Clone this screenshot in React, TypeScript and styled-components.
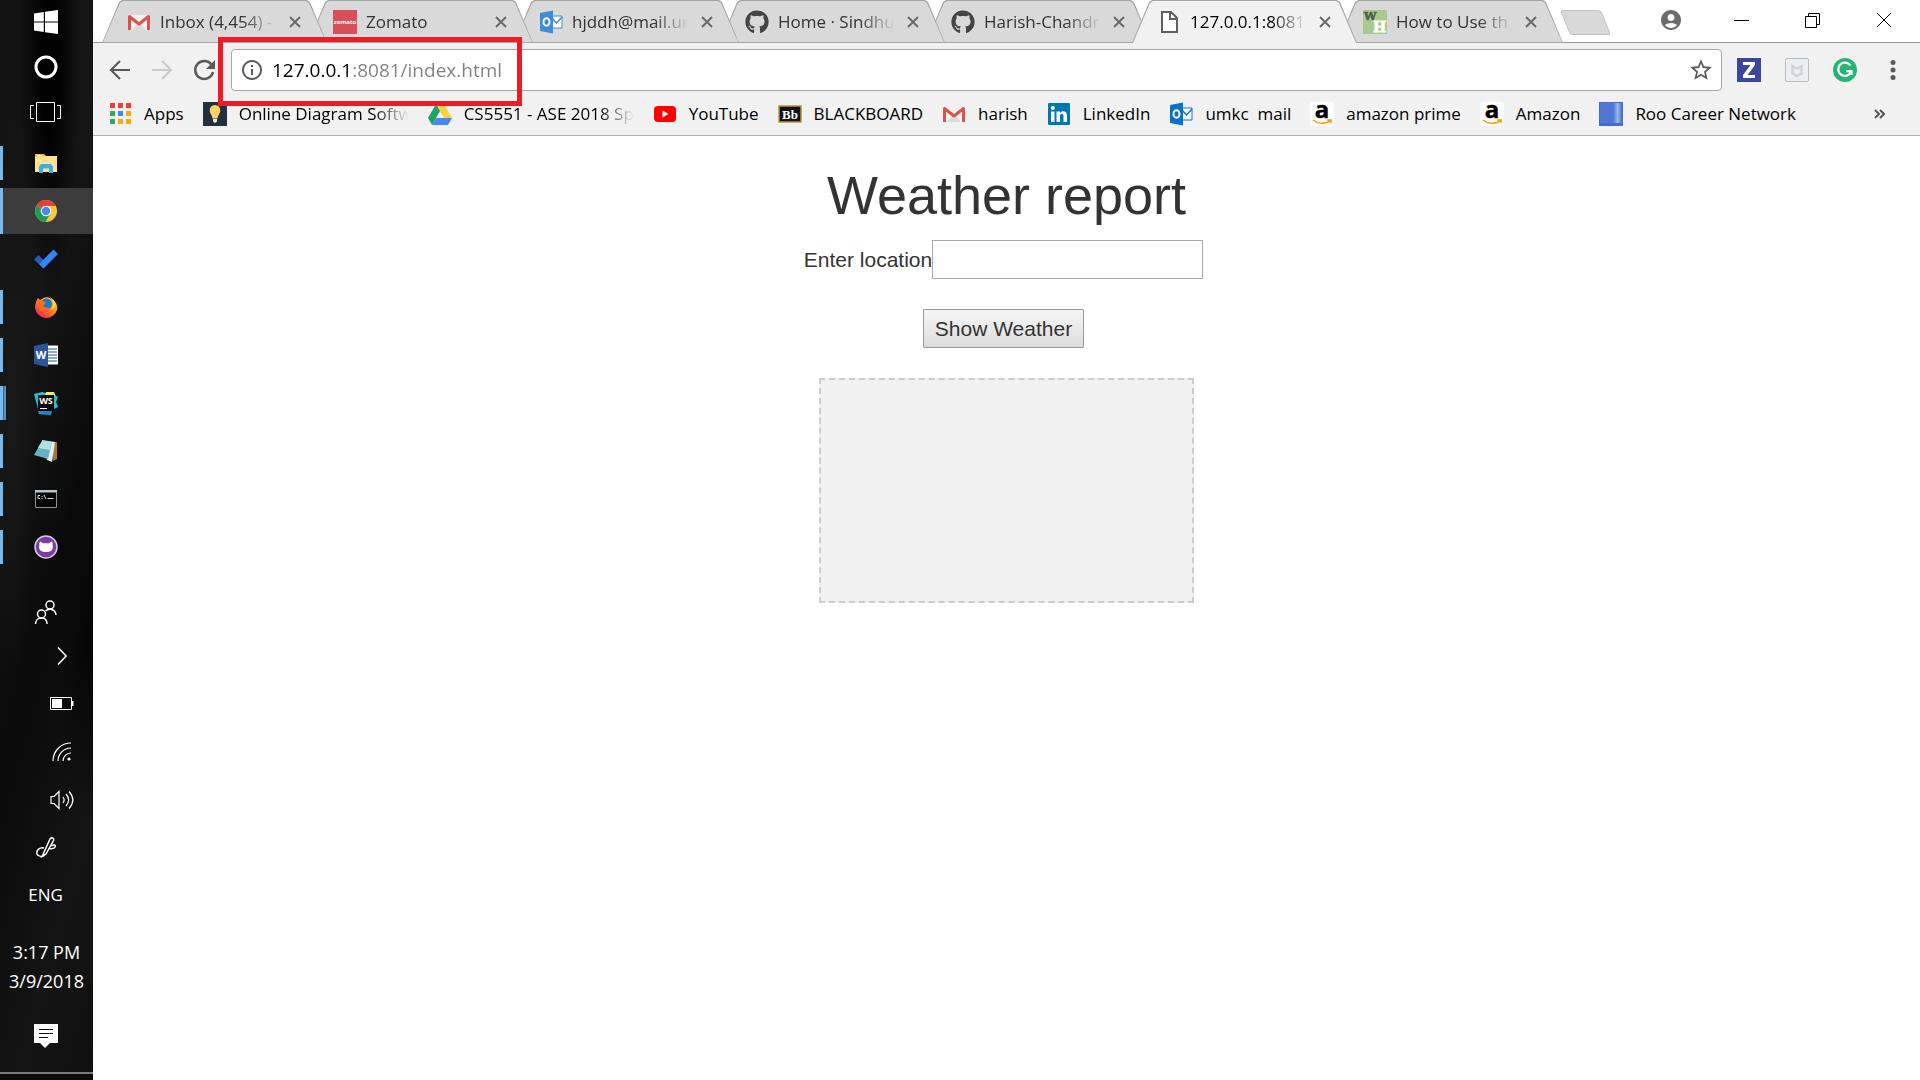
import React from 'react';
import styled, { createGlobalStyle, css } from 'styled-components';
import { FaGithub } from 'react-icons/fa';
import { MdAccountCircle, MdStarBorder, MdInfoOutline } from 'react-icons/md';

const UI_FONT = '"Open Sans", "Noto Sans", sans-serif';
const PAGE_FONT = '"Liberation Sans", Arial, sans-serif';

const GlobalStyle = createGlobalStyle`
  *, *::before, *::after { box-sizing: border-box; }
  body { margin: 0; background: #fff; font-family: ${PAGE_FONT}; }
  button { font: inherit; }
  svg { display: block; flex: none; }
`;

const Desktop = styled.div`
  display: grid;
  grid-template-columns: 93px minmax(0, 1fr);
  min-height: 100vh;
`;

/* ---------- Taskbar ---------- */

const Taskbar = styled.nav`
  display: flex;
  flex-direction: column;
  color: #fff;
  font-family: ${UI_FONT};
  font-size: 17px;
  line-height: 29px;
  background:
    radial-gradient(ellipse 30px 240px at 50px 60px, #020202 30%, transparent),
    radial-gradient(ellipse 34px 180px at 88px 640px, #060606, transparent),
    radial-gradient(ellipse 24px 260px at 12px 420px, #181818, transparent),
    linear-gradient(105deg, #121212 0%, #161616 30%, #0a0a0a 55%, #141414 80%, #101010 100%);
`;

const plainButton = css`
  display: flex;
  align-items: center;
  justify-content: center;
  padding: 0;
  border: 0;
  background: none;
  color: inherit;
`;

const SystemButton = styled.button`
  ${plainButton}
  height: 45px;
  padding: 0 2px 2px 0;
`;

const Apps = styled.div`
  display: flex;
  flex-direction: column;
  padding-top: 4px;
`;

const AppButton = styled.button<{ $state?: 'open' | 'active' | 'multiple' }>`
  ${plainButton}
  height: 46px;
  margin: 1px 0;
  padding-right: 2px;
  background-color: ${(p) => (p.$state === 'active' ? '#3c3c3c' : 'transparent')};
  background-image: ${(p) =>
    p.$state === 'multiple'
      ? 'linear-gradient(90deg, #76b9ed 0 3px, #44698a 3px 4px, #5c8fbb 4px 6px)'
      : p.$state
        ? 'linear-gradient(#76b9ed, #76b9ed)'
        : 'none'};
  background-repeat: no-repeat;
  background-position: left center;
  background-size: ${(p) => (p.$state === 'multiple' ? '6px' : '3px')} ${(p) => (p.$state === 'active' ? '46px' : '34px')};
`;

const Tray = styled.div`
  display: flex;
  flex-direction: column;
  margin-top: auto;
`;

const TrayButton = styled.button<{ $indent?: boolean; $height?: number }>`
  ${plainButton}
  height: ${(p) => p.$height ?? 48}px;
  padding-right: 2px;
  padding-left: ${(p) => (p.$indent ? '32px' : '0')};
`;

const Clock = styled.div`
  display: flex;
  flex-direction: column;
  align-items: center;
  padding: 20px 0 16px;
  font-size: 18px;
`;

const ShowDesktop = styled.button`
  height: 8px;
  margin-top: 12px;
  padding: 0;
  border: 0;
  border-top: 2px solid #7b7b7b;
  background: #0b0b0b;
`;

/* ---------- Browser frame ---------- */

const Browser = styled.div`
  position: relative;
  display: flex;
  flex-direction: column;
  font-family: ${UI_FONT};
`;

const TabStrip = styled.div`
  display: flex;
  height: 43px;
  padding-left: 9px;
  box-shadow: inset 0 -1px #999;
`;

const TabList = styled.ul`
  display: flex;
  margin: 0;
  padding: 0;
  list-style: none;
  isolation: isolate;
`;

const Tab = styled.li<{ $active?: boolean; $level: number }>`
  position: relative;
  z-index: ${(p) => p.$level};
  display: flex;
  align-items: center;
  width: 225px;
  height: 43px;
  margin-right: -19px;
  padding: 0 20px 0 25px;
  color: ${(p) => (p.$active ? '#000' : '#333')};

  &::before,
  &::after {
    content: '';
    position: absolute;
    z-index: -1;
    inset: 0;
    background: #a6a6a6;
    clip-path: polygon(0 100%, 17px 2px, 20px 0, calc(100% - 20px) 0, calc(100% - 17px) 2px, 100% 100%);
  }

  &::after {
    inset: 1px 1px ${(p) => (p.$active ? '0' : '1px')};
    background: ${(p) => (p.$active ? '#f1f1f1' : '#d9d9d9')};
  }
`;

const TabButton = styled.button`
  ${plainButton}
  flex: 1;
  min-width: 0;
  justify-content: flex-start;
  gap: 9px;
  height: 42px;
  padding-right: 6px;
`;

const TabTitle = styled.span`
  flex: 1;
  overflow: hidden;
  font-size: 17px;
  line-height: 24px;
  text-align: left;
  white-space: nowrap;
  mask-image: linear-gradient(90deg, #000 calc(100% - 36px), transparent);
`;

const CloseButton = styled.button`
  ${plainButton}
  width: 24px;
  height: 24px;
  color: #6a6a6a;
`;

const NewTab = styled.button`
  width: 41px;
  height: 25px;
  margin: 10px 0 0 21px;
  padding: 0;
  border: 1px solid #c2c2c2;
  border-radius: 3px;
  background: #d9d9d9;
  transform: skewX(22deg);
`;

const WindowControls = styled.div`
  display: flex;
  margin-left: auto;
  padding-right: 1px;
`;

const WindowButton = styled.button`
  ${plainButton}
  width: 71px;
  height: 40px;
`;

const Toolbar = styled.div`
  display: flex;
  align-items: center;
  gap: 15px;
  padding: 6px 15px 0;
  background: #f1f1f1;
  color: #5a5a5a;
`;

const ToolGroup = styled.div<{ $gap: number }>`
  display: flex;
  gap: ${(p) => p.$gap}px;
`;

const ToolButton = styled.button<{ $dim?: boolean }>`
  ${plainButton}
  width: 24px;
  height: 24px;
  opacity: ${(p) => (p.$dim ? 0.25 : 1)};
`;

const Omnibox = styled.form`
  display: flex;
  flex: 1;
  align-items: center;
  gap: 8px;
  height: 42px;
  padding: 0 8px;
  border: 1px solid #a6a6a6;
  border-radius: 4px;
  background: #fff;
`;

const Address = styled.input`
  flex: 1;
  min-width: 0;
  height: 38px;
  padding: 0;
  border: 0;
  outline: 0;
  font-family: ${UI_FONT};
  font-size: 19px;
  background: linear-gradient(90deg, #000 80px, #808080 80px);
  background-clip: text;
  color: transparent;
`;

const Bookmarks = styled.div`
  display: flex;
  align-items: center;
  gap: 19px;
  height: 45px;
  padding: 2px 35px 0 15px;
  border-bottom: 1px solid #b0b0b0;
  background: #f1f1f1;
  white-space: nowrap;
`;

const Bookmark = styled.a`
  display: flex;
  align-items: center;
  gap: 12px;
  color: #000;
  font-size: 17px;
  line-height: 24px;
  text-decoration: none;
  white-space: pre;
`;

const BookmarkLabel = styled.span<{ $faded?: boolean }>`
  ${(p) =>
    p.$faded &&
    css`
      width: 170px;
      overflow: hidden;
      mask-image: linear-gradient(90deg, #000 calc(100% - 36px), transparent);
    `}
`;

const MoreButton = styled.button`
  ${plainButton}
  height: 24px;
  margin-left: auto;
  color: #555;
`;

const Highlight = styled.div`
  position: absolute;
  top: 37px;
  left: 125px;
  width: 304px;
  height: 69px;
  border: 5px solid #ed1c24;
  z-index: 20;
  pointer-events: none;
`;

/* ---------- Page ---------- */

const Page = styled.main`
  display: flex;
  flex-direction: column;
  align-items: center;
  padding-top: 30px;
  color: #333;
  font-family: ${PAGE_FONT};
  font-size: 21px;
  line-height: 30px;
`;

const Title = styled.h1`
  margin: 0 0 15px;
  font-size: 54px;
  font-weight: 500;
  line-height: 59px;
`;

const WeatherForm = styled.form`
  display: flex;
  flex-direction: column;
  align-items: center;
  gap: 30px;
  padding-right: 6px;
`;

const Field = styled.div`
  display: flex;
  align-items: center;
`;

const LocationInput = styled.input`
  width: 271px;
  height: 39px;
  padding: 2px;
  border: 1px solid #a9a9a9;
  font: inherit;
`;

const SubmitButton = styled.button`
  height: 39px;
  padding: 0 11px;
  border: 1px solid #999;
  border-radius: 1px;
  background: linear-gradient(#f6f6f6, #dcdcdc);
  color: #333;
`;

const Result = styled.section`
  width: 375px;
  height: 225px;
  margin-top: 30px;
  border: 2px dashed #ccc;
  background: #f1f1f1;
`;

/* ---------- Icons ---------- */

const Gmail = () => (
  <svg width="24" height="24" viewBox="0 0 24 24">
    <path d="M3 5h18v15H3z" fill="#f2f2f2" />
    <path d="M5 20l7-8 7 8z" fill="#dcdcdc" />
    <path d="M2.500 20V6.500L12 14l9.500-7.500V20" fill="none" stroke="#d9534a" strokeWidth="3" strokeLinejoin="round" />
  </svg>
);

const Zomato = () => (
  <svg width="24" height="24" viewBox="0 0 24 24">
    <rect width="24" height="24" fill="#d64f5b" />
    <text x="12" y="14" fill="#fff" fontSize="6" fontWeight="700" textAnchor="middle" fontFamily="Open Sans, sans-serif">zomato</text>
  </svg>
);

const Outlook = ({ color = '#0a72c6' }: { color?: string }) => (
  <svg width="24" height="24" viewBox="0 0 24 24">
    <path d="M12 6h11v12H12z" fill="#fff" stroke={color} />
    <path d="M13 8l4.500 5L23 7" fill="none" stroke={color} strokeWidth="1.500" />
    <path d="M1 3l13-2.500v23L1 21z" fill={color} />
    <ellipse cx="7.500" cy="12" rx="3" ry="3.800" fill="none" stroke="#fff" strokeWidth="2" />
  </svg>
);

const Doc = () => (
  <svg width="24" height="24" viewBox="0 0 24 24" fill="none" stroke="#5f5f5f" strokeWidth="2">
    <path d="M5 2h9l6 6v14H5z" fill="#fff" />
    <path d="M13 2v7h7" />
  </svg>
);

const WikiHow = () => (
  <svg width="24" height="24" viewBox="0 0 24 24">
    <rect width="24" height="24" fill="#a9c98f" />
    <text x="1" y="10" fill="#4f6048" stroke="#4f6048" strokeWidth=".6" fontSize="11" fontWeight="700" fontFamily="DejaVu Serif, serif">W</text>
    <text x="10" y="22" fill="#fff" stroke="#fff" strokeWidth=".8" fontSize="14" fontWeight="700" fontFamily="DejaVu Serif, serif">H</text>
  </svg>
);

const Cross = ({ size, width }: { size: number; width: number }) => (
  <svg width={size} height={size} viewBox={`0 0 ${size} ${size}`} stroke="currentColor" strokeWidth={width}>
    <path d={`M1 1L${size - 1} ${size - 1}M${size - 1} 1L1 ${size - 1}`} />
  </svg>
);

const Arrow = ({ flip }: { flip?: boolean }) => (
  <svg width="24" height="24" viewBox="0 0 24 24" fill="none" stroke="currentColor" strokeWidth="2.200">
    <path d={flip ? 'M2 12h19M12 3l9 9-9 9' : 'M22 12H3M12 3l-9 9 9 9'} />
  </svg>
);

const Reload = () => (
  <svg width="24" height="24" viewBox="0 0 24 24">
    <path d="M19.800 7A9 9 0 1 0 21 14" fill="none" stroke="currentColor" strokeWidth="2.500" />
    <path d="M23 2v9h-9z" fill="currentColor" />
  </svg>
);

const ZBox = () => (
  <svg width="24" height="24" viewBox="0 0 24 24">
    <rect width="24" height="24" fill="#3a479c" />
    <path d="M6 4h12v3l-7.500 10H18v3H6v-3l7.500-10H6z" fill="#fff" />
  </svg>
);

const Shield = () => (
  <svg width="24" height="24" viewBox="0 0 24 24" fill="none">
    <rect x=".5" y=".5" width="23" height="23" rx="1.500" fill="#eceeef" stroke="#b4bcc1" />
    <path d="M7.500 8v7.500l4.500 2.500 4.500-2.500V8L12 10.500z" stroke="#cfd4d7" strokeWidth="2.500" />
  </svg>
);

const Grammarly = () => (
  <svg width="24" height="24" viewBox="0 0 24 24" fill="none">
    <circle cx="12" cy="12" r="12" fill="#25b473" />
    <path d="M17.500 7.500A6.700 6.700 0 1 0 18 14M13 13.200h5.500V17" stroke="#fff" strokeWidth="2.200" />
  </svg>
);

const Dots = () => (
  <svg width="24" height="24" viewBox="0 0 24 24" fill="currentColor">
    <circle cx="12" cy="4.500" r="2.500" />
    <circle cx="12" cy="12" r="2.500" />
    <circle cx="12" cy="19.500" r="2.500" />
  </svg>
);

const GRID_COLORS = ['#ea4335', '#ea4335', '#ea4335', '#34a853', '#4285f4', '#fbab05', '#34a853', '#fbab05', '#fbab05'];
const AppsGrid = () => (
  <svg width="24" height="24" viewBox="0 0 24 24">
    {GRID_COLORS.map((color, i) => (
      <rect key={i} x={2 + (i % 3) * 8} y={1 + Math.floor(i / 3) * 8} width="5" height="5" fill={color} />
    ))}
  </svg>
);

const Bulb = () => (
  <svg width="24" height="24" viewBox="0 0 24 24">
    <rect width="24" height="24" fill="#22303f" />
    <path d="M12 3a5.300 5.300 0 0 0-5.300 5.500c0 3 2.300 4 2.800 8h5c.5-4 2.800-5 2.800-8A5.300 5.300 0 0 0 12 3z" fill="#fdd367" />
    <path d="M10 17h4v2.500l-2 1.500-2-1.500z" fill="#e8eaec" />
  </svg>
);

const Drive = () => (
  <svg width="24" height="24" viewBox="0 0 24 24">
    <path d="M8 2h8l8 14h-8z" fill="#ffcf48" />
    <path d="M8 2L0 16l4 7 8-14z" fill="#1ea362" />
    <path d="M8 16h16l-4 7H4z" fill="#4688f4" />
  </svg>
);

const YouTube = () => (
  <svg width="24" height="24" viewBox="0 0 24 24">
    <rect x="1" y="4" width="22" height="16" rx="4" fill="#f00" />
    <path d="M9.500 8.500l6 3.500-6 3.500z" fill="#fff" />
  </svg>
);

const Blackboard = () => (
  <svg width="24" height="24" viewBox="0 0 24 24">
    <rect x="1" y="4" width="22" height="16" fill="#111" stroke="#b8963f" strokeWidth="1.500" />
    <text x="12" y="16.500" fill="#fff" fontSize="13" fontWeight="700" textAnchor="middle" fontFamily="Liberation Serif, serif">Bb</text>
  </svg>
);

const LinkedIn = () => (
  <svg width="24" height="24" viewBox="0 0 24 24">
    <rect x="1" y="1" width="22" height="22" rx="1" fill="#0077b5" />
    <path d="M4 9.500h3.500V20H4zM9.500 9.500H13V11c2-3 7-2.500 7 2.500V20h-3.500v-6c0-3-3.500-3-3.500 0v6H9.500z" fill="#fff" />
    <circle cx="5.750" cy="6" r="2" fill="#fff" />
  </svg>
);

const AmazonLogo = () => (
  <svg width="24" height="24" viewBox="0 0 24 24">
    <rect width="24" height="24" rx="3" fill="#fff" />
    <text x="12" y="16" fill="#000" stroke="#000" strokeWidth=".5" fontSize="24" fontWeight="700" textAnchor="middle" fontFamily="Open Sans, sans-serif">a</text>
    <path d="M3 18c5 4 12 4.500 17 1M17 18h4v3" fill="none" stroke="#f90" strokeWidth="1.600" />
  </svg>
);

const Roo = () => (
  <svg width="24" height="24" viewBox="0 0 24 24">
    <defs>
      <linearGradient id="roo">
        <stop offset=".6" stopColor="#4f78d4" />
        <stop offset=".8" stopColor="#9db8ee" />
        <stop offset="1" stopColor="#4470cc" />
      </linearGradient>
    </defs>
    <rect width="24" height="24" fill="#4470cc" />
    <path d="M1 1h22v20H1z" fill="url(#roo)" />
  </svg>
);

const Chevrons = () => (
  <svg width="11" height="10" viewBox="0 0 11 10" fill="none" stroke="currentColor" strokeWidth="2">
    <path d="M1 1l4 4-4 4M6 1l4 4-4 4" />
  </svg>
);

const WindowsLogo = () => (
  <svg width="24" height="24" viewBox="0 0 24 24" fill="#fff">
    <path d="M0 3.400L9.800 2v9.400H0zM11 1.800L24 0v11.400H11zM0 12.600h9.800V22L0 20.600zM11 12.600h13V24l-13-1.800z" />
  </svg>
);

const Cortana = () => (
  <svg width="24" height="24" viewBox="0 0 24 24">
    <circle cx="12" cy="12" r="10" fill="none" stroke="#fff" strokeWidth="3" />
  </svg>
);

const TaskView = () => (
  <svg width="31" height="20" viewBox="0 0 31 20" fill="none" stroke="#fff">
    <path d="M6.500.5h18v19h-18zM4 3.500H.5v13H4M27 3.500h3.500v13H27" />
  </svg>
);

const Explorer = () => (
  <svg width="24" height="24" viewBox="0 0 24 24">
    <path d="M1 3h9l2 2v4H1z" fill="#f7b924" />
    <path d="M1 6l11-1h11v16H1z" fill="#ffe394" />
    <path d="M3 4h5v1.500H3z" fill="#fff" />
    <path d="M5 22v-6.500L7 13h10l2 2.500V22h-4v-4.500H9V22z" fill="#36b0e6" />
  </svg>
);

const Chrome = () => (
  <svg width="24" height="24" viewBox="0 0 24 24">
    <circle cx="12" cy="12" r="11" fill="#fdc93c" />
    <path d="M12 12L2.500 6.500A11 11 0 0 0 11.500 23l5-8.500z" fill="#1d9c58" />
    <path d="M12 12L2.500 6.500A11 11 0 0 1 21.700 7H12z" fill="#dc4437" />
    <circle cx="12" cy="12" r="5.300" fill="#fff" />
    <circle cx="12" cy="12" r="4.200" fill="#4688f4" />
  </svg>
);

const Todo = () => (
  <svg width="24" height="24" viewBox="0 0 24 24">
    <path d="M0 12.500L4.500 8l9 9-4 4.500z" fill="#2b56bd" />
    <path d="M5 17L19.500 2.500 24 7 9.500 21.500z" fill="#3484f4" />
  </svg>
);

const Firefox = () => (
  <svg width="24" height="24" viewBox="0 0 24 24">
    <defs>
      <linearGradient id="fox" x1="1" y1="0" x2="0.200" y2="1">
        <stop offset="0" stopColor="#ffe226" />
        <stop offset=".5" stopColor="#ff8a16" />
        <stop offset="1" stopColor="#f0176b" />
      </linearGradient>
    </defs>
    <path d="M4 3l2 2c4-3 8-4 11-1 5 2 7 7 6 11a11.300 11.300 0 0 1-22-2C1 9 2 6 4 3z" fill="url(#fox)" />
    <circle cx="12.500" cy="9" r="5.500" fill="#1579d8" />
    <path d="M4 5c3 0 6 1 8 3l-3 2.500c2 3 4 1 7 3-3 4-9 4-11 0z" fill="#ff6a1a" />
    <path d="M14 1c5 3 7 8 3 14 7-3 6-10-3-14z" fill="#ffd92e" />
  </svg>
);

const Word = () => (
  <svg width="24" height="24" viewBox="0 0 24 24">
    <path d="M12 2.500h12v19H12z" fill="#fff" />
    <path d="M14 6h9M14 9h9M14 12h9M14 15h9M14 18h9" stroke="#2a5699" strokeWidth="1.200" />
    <path d="M0 3l14-3v24L0 21z" fill="#2a5699" />
    <text x="7" y="16" fill="#fff" fontSize="11" fontWeight="700" textAnchor="middle" fontFamily="Open Sans, sans-serif">W</text>
  </svg>
);

const WebStorm = () => (
  <svg width="24" height="24" viewBox="0 0 24 24">
    <path d="M0 3l8-2 4 1 8-1 2 4 2 1-2 5 2 5-6 3-1 5-12-1-2-9z" fill="#1cc6d6" />
    <path d="M12 1h8l1 4-10 1z" fill="#f3ee4b" />
    <path d="M3 14l14 4v6L5 22z" fill="#1a7fd6" />
    <path d="M4 4h16v16H4z" fill="#0b0b0b" />
    <text x="12" y="13" fill="#fff" fontSize="9" fontWeight="700" textAnchor="middle" fontFamily="Open Sans, sans-serif">WS</text>
    <path d="M6 17.500h7" stroke="#fff" />
  </svg>
);

const Notepad = () => (
  <svg width="24" height="24" viewBox="0 0 24 24">
    <path d="M19 3h4v17l-4 2z" fill="#a5762f" />
    <path d="M8 1l13 2-3 20-5-2z" fill="#e4f0f2" />
    <path d="M8 2l10 1-4 17-14-4z" fill="#67b2c0" />
    <path d="M8 2l10 1-2 8-12-2z" fill="#b4dfe5" />
  </svg>
);

const Terminal = () => (
  <svg width="24" height="24" viewBox="0 0 24 24">
    <path d="M1.500 3.500h21v17h-21z" fill="#060606" stroke="#8e9395" />
    <path d="M1 3h22v2.500H1z" fill="#b9c4ca" />
    <path d="M6 8.500H4v3h2M8 9v1M8 11v1M10 8l2 4M13.500 11.500h6" fill="none" stroke="#ddd" />
  </svg>
);

const GitHubDesktop = () => (
  <svg width="24" height="24" viewBox="0 0 24 24">
    <circle cx="12" cy="12" r="11" fill="#7d3aa0" stroke="#d8cbe0" strokeWidth="1.500" />
    <path d="M6 6.500l3.500 1.700h5L18 6.500c.8 1.500.8 2.500.6 3.700 1 4-1 6.800-6.600 6.800s-7.600-2.800-6.600-6.800c-.2-1.200-.2-2.200.6-3.700z" fill="#fff" />
  </svg>
);

const line = { fill: 'none', stroke: '#fff', strokeWidth: 1.5 };

const People = () => (
  <svg width="24" height="24" viewBox="0 0 24 24" {...line}>
    <circle cx="16" cy="5" r="4" />
    <circle cx="7.500" cy="14" r="4" />
    <path d="M1.500 24c0-4 3-6 6-6s5.500 2 5.500 6M11.500 11c3-3 10-2.500 10.500 4" />
  </svg>
);

const ChevronRight = () => (
  <svg width="10" height="18" viewBox="0 0 10 18" {...line}>
    <path d="M1 .5L9.200 9 1 17.500" />
  </svg>
);

const Battery = () => (
  <svg width="24" height="14" viewBox="0 0 24 14" fill="none">
    <path d="M.5.500h21v12H.5z" stroke="#fff" />
    <path d="M2 2h10v9H2zM22 4h1.500v5H22z" fill="#fff" />
  </svg>
);

const Wifi = () => (
  <svg width="20" height="20" viewBox="0 0 20 20" {...line} strokeWidth="1.200">
    <path d="M1 19A18 18 0 0 1 19 1M6 19A13 13 0 0 1 19 6M11 19a8 8 0 0 1 8-8" />
    <circle cx="17" cy="17" r="1.600" fill="#fff" stroke="none" />
  </svg>
);

const Volume = () => (
  <svg width="24" height="20" viewBox="0 0 24 20" {...line} strokeWidth="1.200">
    <path d="M1 6.500h3l5-5v17l-5-5H1zM13 7c1.500 2 1.500 4 0 6M16 4c3.500 4 3.500 8 0 12M19 1.500c5 5.500 5 11.500 0 17" />
  </svg>
);

const Pen = () => (
  <svg width="22" height="22" viewBox="0 0 22 22" {...line}>
    <path d="M8 18.500L15 3c1-2 4.500-1 3.500 1.500L11 18l-4 2.500zM9 12c-4-1-8 2-7 6 1 3 6 3 8 1M16 10c3-2 5-1 4 1s-5 2-6 1" />
  </svg>
);

const ActionCenter = () => (
  <svg width="24" height="24" viewBox="0 0 24 24">
    <path d="M0 0h24v19h-8l-5 5-5-5H0z" fill="#fff" />
    <path d="M5 5.500h14M5 9.500h14M5 13.500h9" stroke="#0b0b0b" />
  </svg>
);

/* ---------- Data ---------- */

const TABS = [
  { title: 'Inbox (4,454) -', icon: <Gmail /> },
  { title: 'Zomato', icon: <Zomato /> },
  { title: 'hjddh@mail.um', icon: <Outlook color="#3a8dd6" /> },
  { title: 'Home · Sindhu', icon: <FaGithub size={24} color="#444" /> },
  { title: 'Harish-Chandr', icon: <FaGithub size={24} color="#444" /> },
  { title: '127.0.0.1:8081/', icon: <Doc />, active: true },
  { title: 'How to Use th', icon: <WikiHow /> },
];

const BOOKMARKS = [
  { label: 'Apps', icon: <AppsGrid /> },
  { label: 'Online Diagram Softw', icon: <Bulb />, faded: true },
  { label: 'CS5551 - ASE 2018 Sp', icon: <Drive />, faded: true },
  { label: 'YouTube', icon: <YouTube /> },
  { label: 'BLACKBOARD', icon: <Blackboard /> },
  { label: 'harish', icon: <Gmail /> },
  { label: 'LinkedIn', icon: <LinkedIn /> },
  { label: 'umkc  mail', icon: <Outlook /> },
  { label: 'amazon prime', icon: <AmazonLogo /> },
  { label: 'Amazon', icon: <AmazonLogo /> },
  { label: 'Roo Career Network', icon: <Roo /> },
];

const APPS: { name: string; icon: React.ReactNode; state?: 'open' | 'active' | 'multiple' }[] = [
  { name: 'File Explorer', icon: <Explorer />, state: 'open' },
  { name: 'Chrome', icon: <Chrome />, state: 'active' },
  { name: 'To-Do', icon: <Todo /> },
  { name: 'Firefox', icon: <Firefox />, state: 'open' },
  { name: 'Word', icon: <Word />, state: 'open' },
  { name: 'WebStorm', icon: <WebStorm />, state: 'multiple' },
  { name: 'Notepad', icon: <Notepad />, state: 'open' },
  { name: 'Command Prompt', icon: <Terminal />, state: 'open' },
  { name: 'GitHub Desktop', icon: <GitHubDesktop />, state: 'open' },
];

export default function App() {
  return (
    <>
      <GlobalStyle />
      <Desktop>
        <Taskbar aria-label="Taskbar">
          <SystemButton aria-label="Start"><WindowsLogo /></SystemButton>
          <SystemButton aria-label="Cortana"><Cortana /></SystemButton>
          <SystemButton aria-label="Task view"><TaskView /></SystemButton>
          <Apps>
            {APPS.map((app) => (
              <AppButton key={app.name} aria-label={app.name} $state={app.state}>{app.icon}</AppButton>
            ))}
          </Apps>
          <Tray>
            <TrayButton aria-label="People" $height={40}><People /></TrayButton>
            <TrayButton aria-label="Hidden icons" $indent><ChevronRight /></TrayButton>
            <TrayButton aria-label="Battery" $indent><Battery /></TrayButton>
            <TrayButton aria-label="Network" $indent><Wifi /></TrayButton>
            <TrayButton aria-label="Volume" $indent><Volume /></TrayButton>
            <TrayButton aria-label="Ink workspace" $height={46}><Pen /></TrayButton>
            <TrayButton>ENG</TrayButton>
            <Clock>
              <span>3:17 PM</span>
              <span>3/9/2018</span>
            </Clock>
            <TrayButton aria-label="Action center"><ActionCenter /></TrayButton>
            <ShowDesktop aria-label="Show desktop" />
          </Tray>
        </Taskbar>

        <Browser>
          <TabStrip>
            <TabList>
              {TABS.map((tab, i) => (
                <Tab key={i} $active={tab.active} $level={tab.active ? 10 : TABS.length - i}>
                  <TabButton>
                    {tab.icon}
                    <TabTitle>{tab.title}</TabTitle>
                  </TabButton>
                  <CloseButton aria-label="Close tab"><Cross size={12} width={2} /></CloseButton>
                </Tab>
              ))}
            </TabList>
            <NewTab aria-label="New tab" />
            <WindowControls>
              <WindowButton aria-label="Profile"><MdAccountCircle size={24} color="#6b6b6b" /></WindowButton>
              <WindowButton aria-label="Minimize">
                <svg width="15" height="1" viewBox="0 0 15 1"><path d="M0 .5h15" stroke="#000" /></svg>
              </WindowButton>
              <WindowButton aria-label="Restore">
                <svg width="15" height="15" viewBox="0 0 15 15" fill="none" stroke="#000">
                  <path d="M.5 3.500h11v11H.5zM3.500 3.500v-3h11v11h-3" />
                </svg>
              </WindowButton>
              <WindowButton aria-label="Close"><Cross size={16} width={1} /></WindowButton>
            </WindowControls>
          </TabStrip>

          <Toolbar>
            <ToolGroup $gap={18}>
              <ToolButton aria-label="Back"><Arrow /></ToolButton>
              <ToolButton aria-label="Forward" $dim><Arrow flip /></ToolButton>
              <ToolButton aria-label="Reload"><Reload /></ToolButton>
            </ToolGroup>
            <Omnibox>
              <MdInfoOutline size={24} />
              <Address aria-label="Address" defaultValue="127.0.0.1:8081/index.html" />
              <ToolButton type="button" aria-label="Bookmark this page"><MdStarBorder size={26} /></ToolButton>
            </Omnibox>
            <ToolGroup $gap={24}>
              <ToolButton aria-label="Zotero"><ZBox /></ToolButton>
              <ToolButton aria-label="WebAdvisor"><Shield /></ToolButton>
              <ToolButton aria-label="Grammarly"><Grammarly /></ToolButton>
              <ToolButton aria-label="Menu"><Dots /></ToolButton>
            </ToolGroup>
          </Toolbar>

          <Bookmarks>
            {BOOKMARKS.map((item) => (
              <Bookmark key={item.label} href="#">
                {item.icon}
                <BookmarkLabel $faded={item.faded}>{item.label}</BookmarkLabel>
              </Bookmark>
            ))}
            <MoreButton aria-label="More bookmarks"><Chevrons /></MoreButton>
          </Bookmarks>

          <Page>
            <Title>Weather report</Title>
            <WeatherForm>
              <Field>
                <label htmlFor="location">Enter location</label>
                <LocationInput id="location" type="text" />
              </Field>
              <SubmitButton type="button">Show Weather</SubmitButton>
            </WeatherForm>
            <Result aria-label="Weather result" />
          </Page>
          <Highlight />
        </Browser>
      </Desktop>
    </>
  );
}
